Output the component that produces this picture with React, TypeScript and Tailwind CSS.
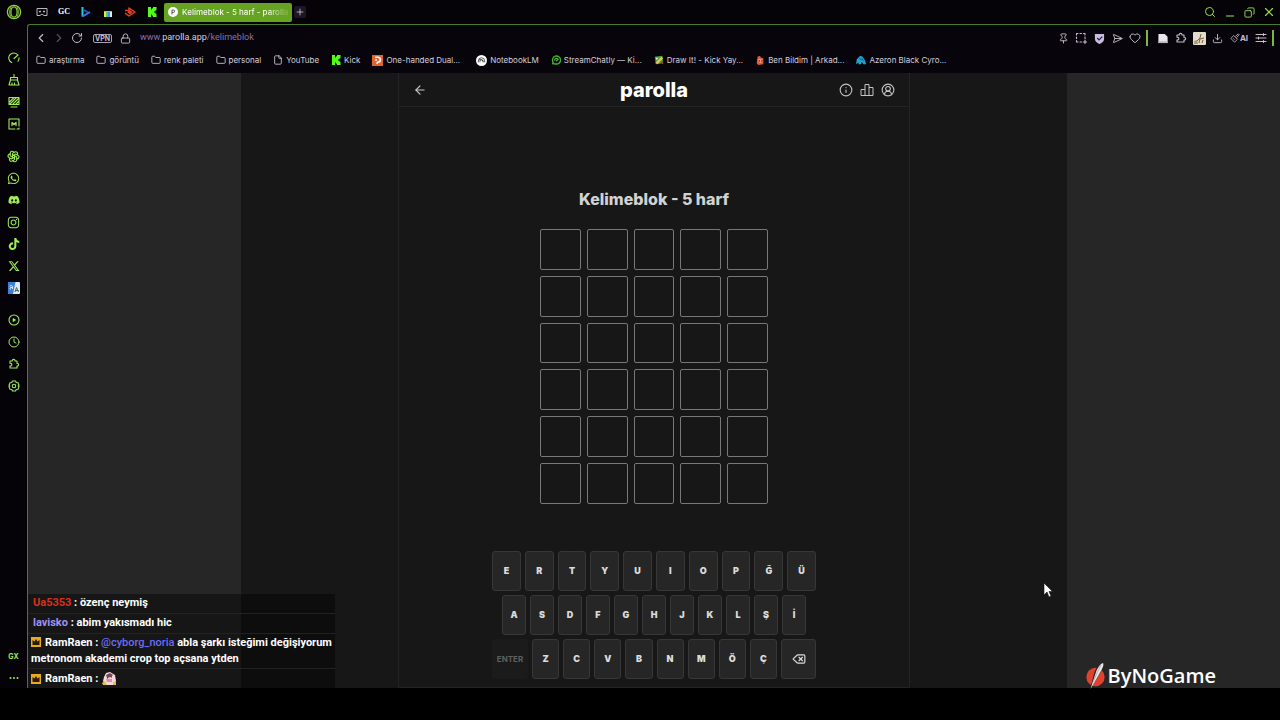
import type { ReactNode } from "react";
import {
  ArrowLeft, ChevronLeft, ChevronRight, CircleUserRound, Clock, Copy, Delete,
  Download, File, Folder, Heart, Info, Lock, Pin, Plus, RotateCw, Search, SendHorizontal, X,
} from "lucide-react";
import { FaDiscord, FaInstagram, FaTiktok, FaWhatsapp, FaXTwitter } from "react-icons/fa6";
import { TbBrandOpenai } from "react-icons/tb";

function KickLogo({ className }: { className: string }) {
  return (
    <svg viewBox="0 0 10 10" className={className} fill="#53fc18" aria-hidden="true">
      <path d="M1 0h3v2.5h1v-1.3h1V0h3.5v3.2h-1v1H7.300v1.600h1.200v1h1V10H6V8.800H5V7.500H4V10H1z" />
    </svg>
  );
}

function OperaLogo() {
  return (
    <svg viewBox="0 0 16 16" className="size-4" fill="none" stroke="#8fd43f" aria-hidden="true">
      <circle cx="8" cy="8" r="6.600" strokeWidth="1.300" />
      <ellipse cx="8" cy="8" rx="3.100" ry="5.200" strokeWidth="1.200" />
      <path d="M5 3.200C3.200 5.500 3.200 10.500 5 12.800M11 3.200c1.800 2.300 1.800 7.300 0 9.600" strokeWidth=".9" />
    </svg>
  );
}

function Line({ children, width = 2.2 }: { children: ReactNode; width?: number }) {
  return (
    <svg
      viewBox="0 0 24 24"
      className="size-3"
      fill="none"
      stroke="currentColor"
      strokeWidth={width}
      strokeLinecap="round"
      strokeLinejoin="round"
      aria-hidden="true"
    >
      {children}
    </svg>
  );
}

const puzzlePath =
  "M4 6h4.500a2.800 2.800 0 1 1 5.500 0h4v5a2.600 2.600 0 1 1 0 5v4H4v-4.200a2.700 2.700 0 1 0 0-5z";

const pinnedTabs = [
  {
    label: "Oyunlar",
    icon: (
      <svg viewBox="0 0 12 10" className="h-2.5 w-3" fill="none" stroke="#b9b5c0" aria-hidden="true">
        <path d="M1 1.500h10v7H8L6 7 4 8.500H1z" strokeLinejoin="round" />
        <path d="M3 4.500h2M7 4.500h2" strokeWidth="1.500" />
      </svg>
    ),
  },
  { label: "GC", icon: <span className="font-['Liberation_Serif',serif] text-[8px] font-bold text-white">GC</span> },
  {
    label: "Video",
    icon: (
      <svg viewBox="0 0 10 12" className="h-3 w-2.5" fill="none" strokeWidth="2" aria-hidden="true">
        <path d="M1.500 1v9.500" stroke="#28c8e8" />
        <path d="M1.500 10.500L9 6" stroke="#2f7df0" />
        <path d="M3 4l4 2.500" stroke="#3454c8" strokeWidth="1.500" />
      </svg>
    ),
  },
  {
    label: "Renkler",
    icon: (
      <svg viewBox="0 0 8 6" className="mt-1 h-1.5 w-2" aria-hidden="true">
        <path d="M0 1h2v5H0z" fill="#f4e04a" />
        <path d="M2 1h2v5H2z" fill="#42d65a" />
        <path d="M4 1h2v5H4z" fill="#3a8cf2" />
        <path d="M6 1h2v5H6z" fill="#e9e9e9" />
        <path d="M0 0h8v1H0z" fill="#55cfd3" />
      </svg>
    ),
  },
  {
    label: "Yayın",
    icon: (
      <svg viewBox="0 0 12 12" className="size-3" fill="none" stroke="#e8401c" strokeWidth="1.500" aria-hidden="true">
        <path d="M1 4.500h4V2l6 4-6 4-4-3" strokeLinejoin="round" />
        <path d="M4.500 6.200L6 5l1.500 1L6 7.500z" />
      </svg>
    ),
  },
  { label: "Kick", icon: <KickLogo className="size-2.5" /> },
];

type Shortcut = { label: string; icon: ReactNode };

const sideGroups: Shortcut[][] = [
  [
    {
      label: "Hız",
      icon: (
        <Line>
          <path d="M7.500 21A10 10 0 1 1 20 6.500M22 11.500a10 10 0 0 1-2 7M12 13l8-7" />
        </Line>
      ),
    },
    {
      label: "Temizleyici",
      icon: (
        <Line>
          <path d="M12 1v6M5 7h14v5H5zM5 12l-3 10h20l-3-10M8 22v-4M13 22v-4" />
        </Line>
      ),
    },
    {
      label: "Duvar kağıdı",
      icon: (
        <Line>
          <path d="M2 3h20v14H2zM3 12l9-9M3 17L17 3M9 17L21 5M15 17l6-6M6 22h12" />
        </Line>
      ),
    },
    {
      label: "Mods",
      icon: (
        <Line>
          <path d="M14 22H2V2h20v14M18 22h4v-2" />
          <path d="M8 15V9l4 4 4-4v6" strokeWidth="2.500" />
        </Line>
      ),
    },
  ],
  [
    { label: "ChatGPT", icon: <TbBrandOpenai className="size-[13px]" /> },
    { label: "WhatsApp", icon: <FaWhatsapp className="size-[13px]" /> },
    { label: "Discord", icon: <FaDiscord className="size-3" /> },
    { label: "Instagram", icon: <FaInstagram className="size-[13px]" /> },
    { label: "TikTok", icon: <FaTiktok className="size-3" /> },
    { label: "X", icon: <FaXTwitter className="size-3" /> },
    {
      label: "Çeviri",
      icon: (
        <svg viewBox="0 0 12 12" className="size-3" aria-hidden="true">
          <rect width="12" height="12" rx="1" fill="#dfe9f5" />
          <path d="M0 0h7.500L5 12H0z" fill="#3f7fd8" />
          <path d="M2 4.500c0-1.500 2.500-1.500 2.500.5v2M4.500 5.500H3c-1.500 0-1.500 2 0 1.500" stroke="#fff" strokeWidth=".8" fill="none" />
          <path d="M7 10l1.500-4.500L10.500 10M7.500 8.500h3" stroke="#3f6a55" fill="none" />
        </svg>
      ),
    },
  ],
  [
    {
      label: "Oynatıcı",
      icon: (
        <Line>
          <circle cx="12" cy="12" r="10" />
          <path d="M10.500 9.500l4 2.500-4 2.500z" fill="currentColor" />
        </Line>
      ),
    },
    { label: "Geçmiş", icon: <Clock className="size-3" /> },
    {
      label: "Uzantılar",
      icon: (
        <Line>
          <path d={puzzlePath} />
        </Line>
      ),
    },
    {
      label: "Ayarlar",
      icon: (
        <Line>
          <path d="M9 2h6l1.500 3 3.500.500 2 5-1.500 1.500 1.500 1.500-2 5-3.500.500L15 22H9l-1.500-3-3.500-.500-2-5L3.500 12 2 10.500l2-5 3.500-.500z" />
          <circle cx="12" cy="12" r="3.500" />
        </Line>
      ),
    },
  ],
];

const folder = <Folder className="size-2.5" />;

const bookmarks: Shortcut[] = [
  { label: "araştırma", icon: folder },
  { label: "görüntü", icon: folder },
  { label: "renk paleti", icon: folder },
  { label: "personal", icon: folder },
  { label: "YouTube", icon: <File className="size-2.5" /> },
  { label: "Kick", icon: <KickLogo className="size-2.5" /> },
  {
    label: "One-handed Dual...",
    icon: (
      <svg viewBox="0 0 12 12" className="size-[11px]" aria-hidden="true">
        <path d="M0 0h12v12H0z" fill="#e4622d" />
        <path d="M3.500 2.500h3a2.600 2.600 0 0 1 0 5.200L5 9.500M3.500 5.500h2" stroke="#fff" strokeWidth="1.800" fill="none" />
      </svg>
    ),
  },
  {
    label: "NotebookLM",
    icon: (
      <svg viewBox="0 0 12 12" className="ml-1 size-[11px]" fill="none" stroke="#222" aria-hidden="true">
        <circle cx="6" cy="6" r="6" fill="#fff" stroke="none" />
        <path d="M2.500 8V6.500a3.500 3.500 0 0 1 7 0V8M4.300 8V7a1.700 1.700 0 0 1 3.400 0v1M3 5.500c2-1.500 5 0 5 2" strokeWidth=".8" />
      </svg>
    ),
  },
  {
    label: "StreamChatly — Ki...",
    icon: (
      <svg viewBox="0 0 12 12" className="size-2.5" fill="none" stroke="#45b52b" strokeWidth="1.600" aria-hidden="true">
        <path d="M2 10.500l.5-2A4.800 4.800 0 1 1 6 10.800z" />
        <path d="M4 6.500c1-3 3-3 4.500-1.500L6 7.500" />
      </svg>
    ),
  },
  {
    label: "Draw It! - Kick Yay...",
    icon: (
      <svg viewBox="0 0 12 12" className="size-2.5" aria-hidden="true">
        <path d="M1 2l9-1 1 9-9 1z" fill="#4aa53a" />
        <path d="M2 9l7-7 2 2-7 7z" fill="#e7c463" />
        <path d="M2 3l3 1-2 2z" fill="#e6f2da" />
        <path d="M7 8l4-1v4z" fill="#9a4a2a" />
      </svg>
    ),
  },
  {
    label: "Ben Bildim | Arkad...",
    icon: (
      <svg viewBox="0 0 12 12" className="size-2.5" aria-hidden="true">
        <path d="M3 2l3-1 1 2 3 1v7l-6 1-2-2z" fill="#dc5a3c" />
        <path d="M4 5h4v4H5z" fill="#f3b08c" />
        <path d="M5 6h1v2H5zM7 6h1v2H7z" fill="#7c2416" />
      </svg>
    ),
  },
  {
    label: "Azeron Black Cyro...",
    icon: (
      <svg viewBox="0 0 12 12" className="size-2.5" aria-hidden="true">
        <path d="M1 5l4-4 3 1 3 5 1 4H9L7 8l-1 3H3V9L0 11z" fill="#1fa6cf" />
        <path d="M4 4l3 2M7 4l2 3" stroke="#0a3444" strokeWidth=".8" />
      </svg>
    ),
  },
];

const keyRows = ["ERTYUIOPĞÜ", "ASDFGHJKLŞİ", "ZCVBNMÖÇ"];

function Key({ children, label, className = "flex-1" }: { children: ReactNode; label?: string; className?: string }) {
  return (
    <button
      type="button"
      aria-label={label}
      className={`flex h-10 items-center justify-center rounded-[3px] border border-[#373737] bg-[#262626] text-[9px] font-black text-[#dcdcdc] ${className}`}
    >
      {children}
    </button>
  );
}

function ToolButton({ label, children, className = "w-[18px]" }: { label: string; children: ReactNode; className?: string }) {
  return (
    <button type="button" aria-label={label} className={`flex h-5 shrink-0 items-center justify-center ${className}`}>
      {children}
    </button>
  );
}

function Crown() {
  return (
    <svg viewBox="0 0 10 10" className="mr-1 inline-block size-2.5 align-[-1px]" aria-hidden="true">
      <path d="M0 0h10v10H0z" fill="#e5ab22" />
      <path d="M1.500 3l2 1.500L5 2l1.500 2.500 2-1.500v5h-7z" fill="#2b1d05" />
    </svg>
  );
}

function TabStrip() {
  return (
    <header className="flex h-6 items-center bg-[#050308]">
      <button type="button" aria-label="Opera menüsü" className="flex w-7 justify-center">
        <OperaLogo />
      </button>
      <nav aria-label="Sekmeler" className="flex flex-1 items-center pl-[3px]">
        {pinnedTabs.map((tab) => (
          <button key={tab.label} type="button" aria-label={tab.label} className="flex w-[22px] items-center justify-center">
            {tab.icon}
          </button>
        ))}
        <button
          type="button"
          className="ml-px flex h-[19px] w-32 items-center gap-1 rounded-[2px] bg-[#66a322] px-1 text-[8px] font-medium text-white"
        >
          <svg viewBox="0 0 10 10" className="size-2.5 shrink-0" aria-hidden="true">
            <circle cx="5" cy="5" r="5" fill="#fff" />
            <path d="M4 7.500V3h1.300a1.200 1.200 0 0 1 0 2.500H4" stroke="#555" fill="none" />
          </svg>
          <span className="bg-linear-to-r from-white from-80% to-white/10 bg-clip-text whitespace-nowrap text-transparent">
            Kelimeblok - 5 harf - parolla
          </span>
        </button>
        <button type="button" aria-label="Yeni sekme" className="ml-0.5 flex size-3 items-center justify-center rounded-[2px] bg-[#1e1626] text-[#c9c5d0]">
          <Plus className="size-2.5" />
        </button>
      </nav>
      <div className="flex items-center pr-0.5 text-[#9be04a]">
        <ToolButton label="Ara" className="w-5"><Search className="size-3" /></ToolButton>
        <ToolButton label="Küçült" className="w-5">
          <svg viewBox="0 0 10 10" className="size-2.5" stroke="currentColor" aria-hidden="true"><path d="M1 9h8" /></svg>
        </ToolButton>
        <ToolButton label="Geri yükle" className="w-[19px]"><Copy className="size-[11px] -scale-x-100" /></ToolButton>
        <ToolButton label="Kapat" className="w-[19px]"><X className="size-3.5" /></ToolButton>
      </div>
    </header>
  );
}

function SideBar() {
  return (
    <aside className="flex w-[27px] shrink-0 flex-col gap-2.5 bg-[#050308] pt-[23px] text-[#a2ec58]">
      {sideGroups.map((group) => (
        <div key={group[0].label} className="flex flex-col">
          {group.map((item) => (
            <button key={item.label} type="button" aria-label={item.label} className="flex h-[22px] items-center justify-center">
              {item.icon}
            </button>
          ))}
        </div>
      ))}
      <div className="mt-auto flex flex-col">
        <button type="button" className="h-[22px] text-[7px] font-bold">GX</button>
        <button type="button" aria-label="Diğer" className="flex h-5 items-center justify-center">
          <svg viewBox="0 0 10 2" className="h-0.5 w-2.5" fill="currentColor" aria-hidden="true">
            <circle cx="1.500" cy="1" r="1" /><circle cx="5" cy="1" r="1" /><circle cx="8.500" cy="1" r="1" />
          </svg>
        </button>
      </div>
    </aside>
  );
}

function AddressBar() {
  return (
    <div className="flex h-[26px] items-center pr-1.5 pl-1 text-[#c4bdcc]">
      <ToolButton label="Geri"><ChevronLeft className="size-3.5" /></ToolButton>
      <ToolButton label="İleri"><ChevronRight className="size-3.5 text-[#55505c]" /></ToolButton>
      <ToolButton label="Yenile"><RotateCw className="size-3" /></ToolButton>
      <button type="button" className="ml-[7px] h-[9px] w-[19px] rounded-[2px] border border-[#aaa4b2] text-[7px] leading-[7px] font-bold">
        VPN
      </button>
      <ToolButton label="Site bilgisi" className="ml-1 w-[18px]"><Lock className="size-[11px]" /></ToolButton>
      <a href="#kelimeblok" className="ml-1.5 flex-1 font-['Roboto',sans-serif] text-[9px] text-[#8a72a6]">
        www.<span className="text-[#d6d0de]">parolla.app</span>/kelimeblok
      </a>
      <ToolButton label="Sabitle"><Pin className="size-[11px]" /></ToolButton>
      <ToolButton label="Ekran görüntüsü">
        <Line><path d="M3 6V3h3M10 3h3M17 3h3v3M20 10v3M3 10v3M3 17v3h3M10 20h3M20 16v7M16.500 20h7" /></Line>
      </ToolButton>
      <ToolButton label="Reklam engelleyici">
        <svg viewBox="0 0 12 12" className="size-[11px]" aria-hidden="true">
          <path d="M1 1h10v5.500C11 9 8.500 11 6 12 3.500 11 1 9 1 6.500z" fill="#c9bbe2" />
          <path d="M3.500 5.500l2 2 3.500-3.500" stroke="#2b1f45" strokeWidth="1.400" fill="none" />
        </svg>
      </ToolButton>
      <ToolButton label="Gönder"><SendHorizontal className="size-[11px]" /></ToolButton>
      <ToolButton label="Favorilere ekle"><Heart className="size-3" /></ToolButton>
      <span className="mx-0.5 h-4 w-0.5 bg-[#7cb83c]" />
      <ToolButton label="Belge" className="ml-1 w-[18px]">
        <svg viewBox="0 0 10 12" className="h-[11px] w-2.5" aria-hidden="true">
          <path d="M0 1h7l3 3v7H0z" fill="#e8e8ec" /><path d="M0 9h10v2H0z" fill="#b9b9c0" />
        </svg>
      </ToolButton>
      <ToolButton label="Uzantılar"><Line><path d={puzzlePath} /></Line></ToolButton>
      <ToolButton label="Profil">
        <svg viewBox="0 0 13 13" className="size-[13px]" aria-hidden="true">
          <rect width="13" height="13" rx="1" fill="#e2dccb" />
          <path d="M2 11l5-5 1-4M6 11l1-4 4-1M9 11l1-3" stroke="#75603c" fill="none" />
          <path d="M1 9l3-1 1 4H1z" fill="#b09a72" />
        </svg>
      </ToolButton>
      <ToolButton label="İndirilenler"><Download className="size-[11px]" /></ToolButton>
      <button type="button" className="flex w-[26px] items-center justify-center text-[8px] font-bold">
        <svg viewBox="0 0 24 24" className="size-2.5" fill="none" stroke="currentColor" strokeWidth="2" aria-hidden="true">
          <path d="M9 6l-7 7 9 9 7-7zM13 8l7-6 2 2-6 7M8 13l3 3" />
        </svg>
        AI
      </button>
      <ToolButton label="Kolay kurulum">
        <Line><path d="M2 5h20M2 12h20M2 19h20M17 3v4M7 10v4M17 17v4" /></Line>
      </ToolButton>
      <span className="ml-0.5 h-4 w-0.5 bg-[#7cb83c]" />
    </div>
  );
}

function BookmarkBar() {
  return (
    <nav aria-label="Yer imleri" className="flex h-[22px] items-center gap-3 pb-1 pl-2 text-[8px] text-[#d6d1dc]">
      {bookmarks.map((item) => (
        <a key={item.label} href="#yer-imi" className="flex items-center gap-[3px] whitespace-nowrap">
          {item.icon}
          {item.label}
        </a>
      ))}
    </nav>
  );
}

function Game() {
  return (
    <main className="mx-auto flex w-full max-w-[512px] flex-col border-x border-b border-[#242424]">
      <div className="grid h-[34px] grid-cols-3 items-center border-b border-[#242424] px-3.5">
        <button type="button" aria-label="Geri dön" className="justify-self-start text-[#c8c8c8]">
          <ArrowLeft className="size-3.5" />
        </button>
        <h1 className="text-center text-xl leading-6 font-extrabold text-white">parolla</h1>
        <div className="flex gap-[7px] justify-self-end text-[#c4c4c4]">
          <button type="button" aria-label="Bilgi"><Info className="size-3.5" strokeWidth={1.900} /></button>
          <button type="button" aria-label="İstatistikler">
            <svg viewBox="0 0 14 14" className="size-3.5" fill="none" stroke="currentColor" strokeLinejoin="round" aria-hidden="true">
              <path d="M5 12.500v-11h4v11zM5 6.500H1v6h4M9 4.500h4v8H9" />
            </svg>
          </button>
          <button type="button" aria-label="Profil"><CircleUserRound className="size-3.5" strokeWidth={1.900} /></button>
        </div>
      </div>
      <h2 className="mt-20 text-center text-base leading-6 font-extrabold text-[#d2d2d2]">Kelimeblok - 5 harf</h2>
      <div className="mx-auto mt-[18px] grid w-[228px] grid-cols-5 gap-1.5">
        {Array.from({ length: 30 }, (_, i) => (
          <div key={i} className="aspect-square rounded-[2px] border border-[#787878]" />
        ))}
      </div>
      <div className="mx-auto mt-[47px] mb-[7px] flex w-[324px] flex-col gap-1">
        <div className="flex gap-1">
          {[...keyRows[0]].map((k) => <Key key={k}>{k}</Key>)}
        </div>
        <div className="flex gap-1 px-2.5">
          {[...keyRows[1]].map((k) => <Key key={k}>{k}</Key>)}
        </div>
        <div className="flex gap-1">
          <button type="button" disabled className="h-10 w-9 rounded-[3px] bg-[#1b1b1b] text-[8px] font-bold text-[#5f5f5f]">
            ENTER
          </button>
          {[...keyRows[2]].map((k) => <Key key={k}>{k}</Key>)}
          <Key label="Sil" className="w-[35px]"><Delete className="size-3.5" /></Key>
        </div>
      </div>
    </main>
  );
}

function Chat() {
  return (
    <ul className="absolute bottom-0 left-0 w-[307px] divide-y divide-[#222222] bg-black/40 font-['Roboto',sans-serif] text-[11px] leading-4 font-bold text-white">
      <li className="px-[5px] pt-px pb-0.5"><span className="text-[#d9301c]">Ua5353</span> : özenç neymiş</li>
      <li className="px-[5px] pt-px pb-0.5"><span className="text-[#a091f0]">lavisko</span> : abim yakısmadı hic</li>
      <li className="px-[3px] py-px">
        <Crown />RamRaen : <span className="font-medium text-[#6d6cf0]">@cyborg_noria</span> abla şarkı isteğimi değişiyorum
        metronom akademi crop top açsana ytden
      </li>
      <li className="flex h-[19px] items-center px-[3px]">
        <Crown />RamRaen :
        <svg viewBox="0 0 15 15" className="ml-1 size-[15px]" aria-hidden="true">
          <path d="M2 6l2-4 4-1 5 3 1 6-2 4H3L1 10z" fill="#f0d9dc" />
          <path d="M4 4l4-2 3 2-2 2-4 1z" fill="#7c4256" />
          <path d="M4 8h6v3H5z" fill="#dd8d9f" />
          <path d="M5 7h1M9 6h1" stroke="#222" />
          <path d="M0 12l3-2 2 4H1zM11 11h3v3h-3z" fill="#e8bd42" />
        </svg>
      </li>
    </ul>
  );
}

function SponsorLogo() {
  return (
    <div className="absolute right-16 -bottom-0.5 flex items-center">
      <svg viewBox="0 0 20 28" className="h-7 w-5" aria-hidden="true">
        <circle cx="9.500" cy="15" r="9.200" fill="#e2412f" />
        <path d="M4 27L8.500 10C10.500 5 14 1 17 .5c1.500 1 1 4-1 7.500z" fill="#262626" />
        <path d="M4.500 27L10 10c1.500-4 4-8 7-9 1 1.500 0 4-1.500 7z" fill="#e9ece6" />
        <path d="M7 20l5-11 3-6" stroke="#9aa39a" strokeWidth=".8" fill="none" />
      </svg>
      <span className="ml-0.5 font-['Open_Sans',sans-serif] text-xl leading-7 font-semibold text-white">ByNoGame</span>
    </div>
  );
}

export default function App() {
  return (
    <div className="flex min-h-screen flex-col bg-black pb-8 font-['Inter',sans-serif]">
      <TabStrip />
      <div className="flex flex-1 bg-[#050308]">
        <SideBar />
        <div className="flex min-w-0 flex-1 flex-col rounded-tl-[3px] border-t border-l border-[#4d7a26] bg-[#07040b]">
          <AddressBar />
          <BookmarkBar />
          <div className="relative flex flex-1 justify-center bg-[#262626]">
            <div className="flex w-full max-w-[826px] bg-[#171717]">
              <Game />
            </div>
            <Chat />
            <SponsorLogo />
            <svg viewBox="0 0 10 16" className="absolute right-[227px] bottom-[90px] h-4 w-2.5" aria-hidden="true">
              <path d="M1 1v12l3-3 2 5 2-1-2-4.500h3.500z" fill="#fff" stroke="#111" strokeWidth=".6" />
            </svg>
          </div>
        </div>
      </div>
    </div>
  );
}
